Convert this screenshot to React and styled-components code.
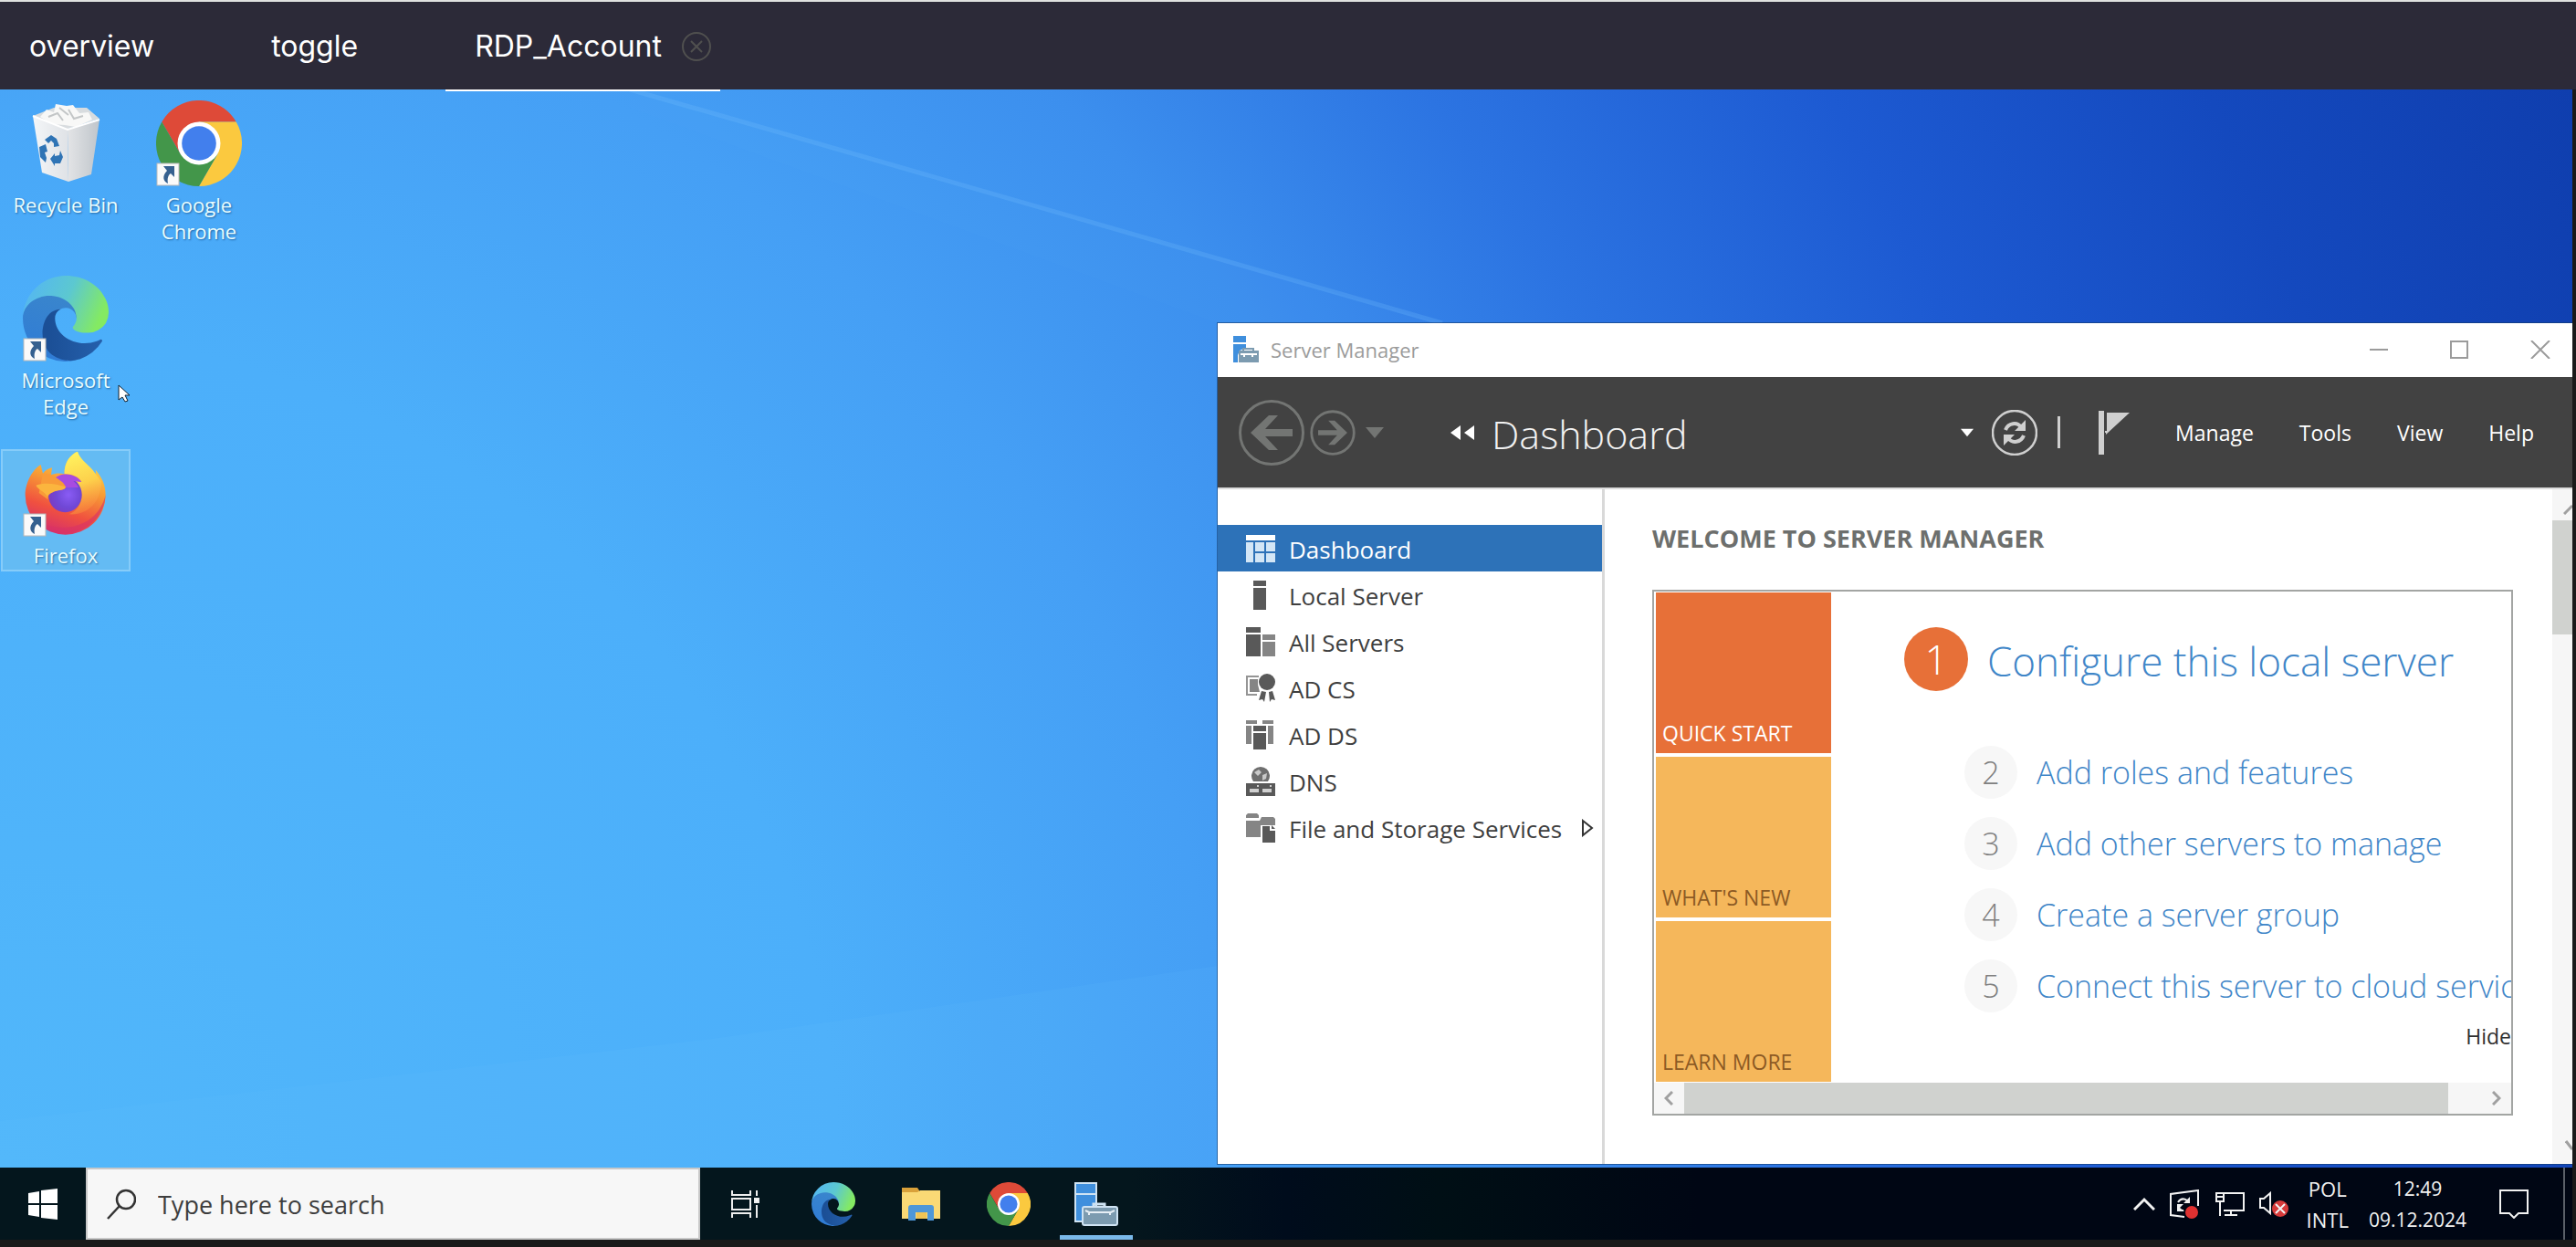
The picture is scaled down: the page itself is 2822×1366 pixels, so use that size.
import React from "react"
import styled, { createGlobalStyle } from "styled-components"

const GlobalStyle = createGlobalStyle`
  * {
    box-sizing: border-box;
  }
  body {
    margin: 0;
    background: #1a1a1a;
    font-family: "Open Sans", "Noto Sans", sans-serif;
  }
  button {
    padding: 0;
    border: 0;
    background: none;
    color: inherit;
    font: inherit;
    cursor: pointer;
  }
  svg {
    display: block;
    flex-shrink: 0;
  }
`

const Page = styled.div`
  display: flex;
  flex-direction: column;
  min-height: 100vh;
  border-top: 2px solid #dfe1df;
`

/* ---------- session tabs ---------- */

const TabBar = styled.nav`
  display: flex;
  align-items: stretch;
  gap: 64px;
  height: 96px;
  background: #2c2a38;
`
const TabItem = styled.div`
  display: flex;
  align-items: center;
  gap: 22px;
  position: relative;
  z-index: 1;
  margin-bottom: -2px;
  padding: 2px ${({ $active }) => ($active ? "10px" : "32px")} 0 32px;
  border-bottom: 2px solid ${({ $active }) => ($active ? "#fff" : "transparent")};
`
const Tab = styled.button`
  color: #fff;
  font-family: Inter, sans-serif;
  font-size: 32px;
  line-height: 40px;
`

/* ---------- remote desktop ---------- */

const Screen = styled.main`
  flex: 1;
  display: flex;
  flex-direction: column;
  padding: 0 4px 8px 0;
  background: #1a1a1a;
`
const Desktop = styled.section`
  flex: 1;
  position: relative;
  min-height: 1181px;
  overflow: hidden;
  background: radial-gradient(
    circle farthest-corner at 0 100%,
    #51b7fa 0%,
    #4caffa 30%,
    #459ff5 44%,
    #3c8fee 54%,
    #2c74e2 64%,
    #1d5ad2 76%,
    #1449be 88%,
    #0f3eae 100%
  );
`
const Wallpaper = styled.svg`
  position: absolute;
  inset: 0;
  width: 100%;
  height: 100%;
`
const Shortcuts = styled.div`
  position: relative;
  display: grid;
  grid-template-columns: 146px 146px;
  grid-auto-rows: 192px;
  padding-top: 10px;
`
const Shortcut = styled.button`
  display: flex;
  flex-direction: column;
  align-items: center;
  gap: 6px;
  justify-self: start;
  align-self: start;
  width: 142px;
  min-height: 134px;
  margin: 0 1px;
  border: 2px solid ${({ $selected }) => ($selected ? "#86ccf9" : "transparent")};
  background: ${({ $selected }) => ($selected ? "#64bbf3" : "none")};
  color: #e9fdff;
  font-size: 22px;
  line-height: 29px;
  text-shadow: 1px 1px 2px rgba(10, 60, 110, 0.6);
`
const ShortcutIcon = styled.span`
  position: relative;
  display: flex;
  align-items: center;
  justify-content: center;
  height: 94px;
`
const ShortcutArrow = styled.svg`
  position: absolute;
  left: 0;
  bottom: 0;
`
const Pointer = styled.svg`
  position: absolute;
  left: 129px;
  top: 323px;
`

/* ---------- server manager window ---------- */

const Window = styled.section`
  position: absolute;
  top: 256px;
  right: 0;
  bottom: 4px;
  left: 1334px;
  display: flex;
  flex-direction: column;
  background: #fff;
  box-shadow: 0 0 0 1px rgba(20, 60, 110, 0.6);
`
const TitleBar = styled.header`
  display: flex;
  align-items: center;
  gap: 12px;
  height: 59px;
  padding: 0 24px 2px 16px;
  color: #9b9b9b;
`
const WindowTitle = styled.h1`
  flex: 1;
  margin: 0;
  font-size: 22px;
  font-weight: 400;
`
const WindowControls = styled.div`
  display: flex;
  gap: 68px;
`
const CommandBar = styled.div`
  display: flex;
  align-items: center;
  height: 121px;
  padding: 0 42px 0 23px;
  background: #424242;
  color: #fff;
`
const History = styled.div`
  display: flex;
  align-items: center;
  gap: 6px;
`
const Breadcrumb = styled.div`
  display: flex;
  align-items: center;
  gap: 18px;
  flex: 1;
  margin-left: 68px;
`
const Location = styled.span`
  padding-top: 4px;
  color: #f2f2f2;
  font-size: 43px;
  font-weight: 300;
  line-height: 60px;
`
const Commands = styled.div`
  display: flex;
  align-items: center;
  gap: 20px;
`
const Separator = styled.span`
  width: 3px;
  height: 35px;
  background: #cfcfcf;
  margin: 0 22px 0 2px;
`
const Menu = styled.div`
  display: flex;
  gap: 50px;
  margin-left: 30px;
  font-size: 23px;
`

const WindowBody = styled.div`
  flex: 1;
  display: flex;
  min-height: 0;
  border-top: 2px solid #dcdcdc;
`
const Sidebar = styled.nav`
  flex: none;
  width: 424px;
  padding-top: 39px;
  border-right: 3px solid #d9d9d9;
`
const SideLink = styled.a`
  display: flex;
  align-items: center;
  gap: 15px;
  height: 51px;
  padding: 0 9px 0 31px;
  background: ${({ $active }) => ($active ? "#2d72b8" : "none")};
  color: ${({ $active }) => ($active ? "#fff" : "#3f3f3f")};
  font-size: 26px;
  text-decoration: none;
  white-space: nowrap;
`
const SideLabel = styled.span`
  flex: 1;
  padding-top: 2px;
`
const Content = styled.div`
  flex: 1;
  min-width: 0;
  padding: 35px 43px 0 52px;
`
const Heading = styled.h2`
  margin: 0 0 37px;
  color: #6d6f6d;
  font-size: 27px;
  font-weight: 700;
  line-height: 38px;
`
const Panel = styled.div`
  border: 2px solid #a3a5a3;
`
const PanelBody = styled.div`
  display: flex;
  gap: 80px;
  padding: 1px 0 1px 2px;
  overflow: hidden;
`
const Tiles = styled.div`
  flex: none;
  display: grid;
  gap: 4px;
  width: 192px;
`
const Tile = styled.button`
  display: flex;
  align-items: flex-end;
  height: 176px;
  padding: 0 7px 6px;
  background: ${({ $active }) => ($active ? "#e77038" : "#f5b75b")};
  color: ${({ $active }) => ($active ? "#fff" : "#8c5a24")};
  font-size: 23px;
`
const Steps = styled.div`
  flex: 1;
  display: flex;
  flex-direction: column;
  min-width: 0;
  padding-top: 38px;
`
const Step = styled.a`
  display: flex;
  align-items: center;
  gap: 21px;
  color: #3f86c8;
  font-size: ${({ $main }) => ($main ? "44px" : "34px")};
  font-weight: 300;
  line-height: 58px;
  text-decoration: none;
  white-space: nowrap;
`
const StepNumber = styled.span`
  flex: none;
  width: ${({ $main }) => ($main ? "70px" : "58px")};
  line-height: ${({ $main }) => ($main ? "70px" : "58px")};
  border-radius: 50%;
  background: ${({ $main }) => ($main ? "#e77038" : "#f7f7f7")};
  color: ${({ $main }) => ($main ? "#fff" : "#7f7f7f")};
  text-align: center;
`
const StepLabel = styled.span`
  padding-top: ${({ $main }) => ($main ? "4px" : "0")};
`
const StepList = styled.div`
  display: grid;
  gap: 20px;
  margin: 60px 0 10px 66px;
`
const Hide = styled.button`
  align-self: flex-end;
  color: #2f2f2f;
  font-size: 23px;
  line-height: 32px;
`
const HorizontalScroll = styled.div`
  display: flex;
  justify-content: space-between;
  align-items: center;
  height: 34px;
  padding: 0 11px;
  background: #f6f6f6;
`
const HorizontalThumb = styled.span`
  flex: 1;
  align-self: stretch;
  margin: 0 48px 0 12px;
  background: #d0d2cf;
`
const VerticalScroll = styled.div`
  flex: none;
  display: flex;
  flex-direction: column;
  align-items: flex-end;
  width: 22px;
  padding: 17px 0 14px;
  overflow: hidden;
  background: #f6f6f6;
`
const VerticalThumb = styled.span`
  width: 22px;
  height: 125px;
  margin: 6px 0 auto;
  background: #d0d2cf;
`

/* ---------- taskbar ---------- */

const Taskbar = styled.footer`
  display: flex;
  align-items: stretch;
  height: 79px;
  background: linear-gradient(90deg, #04161d 0%, #04161d 44%, #000c1c 50%, #000f15 56%, #000614 66%);
  color: #f2f2f2;
`
const StartButton = styled.button`
  display: flex;
  align-items: center;
  justify-content: center;
  width: 94px;
`
const Search = styled.label`
  display: flex;
  align-items: center;
  gap: 24px;
  width: 673px;
  padding-left: 21px;
  border: 2px solid #c8c8c8;
  background: #f7f7f7;
`
const SearchInput = styled.input`
  flex: 1;
  min-width: 0;
  padding: 2px 0 0;
  border: 0;
  outline: 0;
  background: none;
  font-family: inherit;
  font-size: 27px;

  &::placeholder {
    color: #3d3d3d;
    opacity: 1;
  }
`
const Apps = styled.div`
  display: flex;
  gap: 16px;
  margin-left: 10px;
`
const AppButton = styled.button`
  display: flex;
  align-items: center;
  justify-content: center;
  width: 80px;
  border-top: 5px solid transparent;
  border-bottom: 5px solid ${({ $open }) => ($open ? "#7ab9ea" : "transparent")};
`
const Tray = styled.div`
  display: flex;
  align-items: center;
  gap: 16px;
  margin-left: auto;
`
const TrayText = styled.div`
  margin: 0 ${({ $wide }) => ($wide ? "20px 0 6px" : "0 0 4px")};
  font-size: ${({ $wide }) => ($wide ? "21px" : "22px")};
  line-height: 34px;
  text-align: center;
`
const ShowDesktop = styled.button`
  align-self: stretch;
  width: 10px;
  margin-left: 22px;
  border-left: 2px solid #5b6069;
`

/* ---------- drawings ---------- */

const ChromeLogo = ({ size }) => (
    <svg width={size} height={size} viewBox="0 0 48 48">
        <path fill="#de4a38" d="M24 12H44.8A24 24 0 0 0 3.2 12L13.6 30Z" />
        <path fill="#fbc93f" d="M44.8 12A24 24 0 0 1 24 48L34.4 30L24 12Z" />
        <path fill="#43964a" d="M3.2 12A24 24 0 0 0 24 48L34.4 30H13.6Z" />
        <circle cx="24" cy="24" r="12" fill="#fff" />
        <circle cx="24" cy="24" r="9.6" fill="#427fed" />
    </svg>
)

const EdgeLogo = ({ size, id }) => (
    <svg width={size} height={size} viewBox="0 0 256 256">
        <defs>
            <linearGradient id={`${id}a`} x1="0.1" x2="1" y1="0.5" y2="0.5">
                <stop offset="0" stopColor="#1b4f96" />
                <stop offset="1" stopColor="#2560ac" />
            </linearGradient>
            <linearGradient id={`${id}b`} x1="0.6" x2="0.3" y1="0" y2="1">
                <stop offset="0" stopColor="#3a86cc" />
                <stop offset="1" stopColor="#2f7bd6" />
            </linearGradient>
            <linearGradient id={`${id}c`} x1="0" x2="1" y1="0.3" y2="0.6">
                <stop offset="0" stopColor="#54b6f3" />
                <stop offset="0.5" stopColor="#5cc8d0" />
                <stop offset="0.95" stopColor="#84ea62" />
            </linearGradient>
        </defs>
        <path
            fill={`url(#${id}b)`}
            d="M105.73 241.42A79.2 79.2 0 0 1 83 220.08a80.72 80.72 0 0 1 29.5-120.08c3.12-1.47 8.45-4.13 15.54-4a32.35 32.35 0 0 1 25.69 13 31.88 31.88 0 0 1 6.36 18.66c0-.21 24.46-79.6-80-79.6-43.9 0-80 41.66-80 78.21a130.15 130.15 0 0 0 12.11 56 128 128 0 0 0 156.38 67.11 75.55 75.55 0 0 1-62.78-8z"
        />
        <path
            fill={`url(#${id}a)`}
            d="M231.05 190.54a92.92 92.92 0 0 1-10.54 4.71 101.86 101.86 0 0 1-35.9 6.46c-47.32 0-88.54-32.55-88.54-74.32A31.48 31.48 0 0 1 112.5 100c-42.8 1.8-53.8 46.4-53.8 72.53 0 73.88 68.09 81.37 82.76 81.37 7.91 0 19.84-2.3 27-4.56l1.31-.44a128.34 128.34 0 0 0 66.6-52.8 4 4 0 0 0-5.32-5.56z"
        />
        <path
            fill={`url(#${id}c)`}
            d="M152.33 148.86c-.81 1.05-3.3 2.5-3.3 5.66 0 2.61 1.7 5.12 4.72 7.23 14.38 10 41.49 8.68 41.56 8.68a59.56 59.56 0 0 0 30.27-8.35 61.38 61.38 0 0 0 30.43-52.88c.26-22.41-8-37.31-11.34-43.91C223.46 23.84 177.72 0 128 0A128 128 0 0 0 0 126.2c.48-36.54 36.8-66.05 80-66.05 3.5 0 23.46.34 42 10.07 16.34 8.58 24.9 18.94 30.85 29.21 6.18 10.67 7.28 24.15 7.28 29.52s-2.74 13.33-7.8 19.91z"
        />
    </svg>
)

const FirefoxLogo = () => (
    <svg width="94" height="94" viewBox="77 612 282 282">
        <defs>
            <linearGradient id="foxBody" x1="0.7" x2="0.4" y1="0.1" y2="1">
                <stop offset="0" stopColor="#fdd548" />
                <stop offset="0.35" stopColor="#f79a35" />
                <stop offset="0.7" stopColor="#f0513f" />
                <stop offset="1" stopColor="#d62f6b" />
            </linearGradient>
            <linearGradient id="foxTail" x1="0.4" x2="0.6" y1="0" y2="1">
                <stop offset="0" stopColor="#fff25e" />
                <stop offset="0.5" stopColor="#fdd04b" />
                <stop offset="1" stopColor="#f7793a" stopOpacity="0.6" />
            </linearGradient>
            <radialGradient id="foxGlobe" cx="0.6" cy="0.5" r="0.6">
                <stop offset="0" stopColor="#8a5cf5" />
                <stop offset="0.6" stopColor="#7048d6" />
                <stop offset="1" stopColor="#7a3cc2" />
            </radialGradient>
        </defs>
        <path
            fill="url(#foxBody)"
            d="M136 657L143 686C150 676 160 670 173 667L170 690C185 684 200 684 214 688C212 655 230 625 257 614C262 640 300 670 312 695L310 682L318 688L316 674C338 700 349 725 349 757A132 130 0 0 1 85 757C85 715 110 672 136 657Z"
        />
        <path
            fill="#d93266"
            opacity="0.6"
            d="M349 757A132 130 0 0 1 115 834C150 860 190 868 235 862C300 850 335 810 349 757Z"
        />
        <path
            fill="url(#foxTail)"
            d="M257 614C230 625 212 655 214 688C240 686 262 698 270 713L243 712C266 728 275 748 270 768C266 795 250 812 228 820C290 826 338 775 334 712L312 682C300 662 264 640 257 614Z"
        />
        <ellipse cx="216" cy="756" rx="55" ry="58" fill="url(#foxGlobe)" />
        <path fill="#a84be0" d="M178 706C200 680 250 684 270 714L243 711C250 718 256 722 260 732L217 732Z" />
        <path fill="#f89b38" d="M143 686L170 690C190 702 212 714 218 730C216 744 190 738 175 748C162 754 158 762 160 772L130 750Z" />
        <path fill="#fbb53e" d="M120 725C150 714 185 720 218 730C212 746 190 738 175 748C162 752 160 758 158 762C150 746 130 742 120 725Z" />
    </svg>
)

const RecycleBin = () => (
    <svg width="94" height="94" viewBox="0 0 94 94">
        <defs>
            <linearGradient id="binFront" x1="0" x2="1">
                <stop offset="0" stopColor="#f4f6f8" />
                <stop offset="1" stopColor="#dfe2e6" />
            </linearGradient>
            <linearGradient id="binSide" x1="0" x2="1">
                <stop offset="0" stopColor="#e3e4e6" />
                <stop offset="1" stopColor="#bfc5cb" />
            </linearGradient>
        </defs>
        <path fill="#d8dcdf" d="M11 17L34 8L70 8L84 20L47 32Z" />
        <path fill="#f8f8f7" d="M19 18L26 10L34 13L36 4L48 6L55 5L62 14L72 13L76 21L58 29L46 27L32 26Z" />
        <path fill="none" stroke="#c3c6c7" strokeWidth="2" d="M28 18L38 14L44 22M50 10L56 20L66 17M40 8L50 16" />
        <path fill="url(#binFront)" d="M11 17L49 32L50 89L21 79Z" />
        <path fill="url(#binSide)" d="M49 32L84 21L75 81L50 89Z" />
        <path fill="none" stroke="#fff" strokeWidth="2" d="M11 17L49 32L84 21" />
        <path fill="#2f74b5" d="M24 43L31 38L37 42L40 50L34 51L34 47L31 44L28 47ZM18 51L25 48L27 56L24 57L26 63L25 68L19 62ZM30 64L35 58L35 61L40 60L41 55L44 62L41 69L35 69L35 72Z" />
    </svg>
)

const LinkArrow = () => (
    <ShortcutArrow width="26" height="26" viewBox="0 0 26 26">
        <rect x="1" y="1" width="24" height="24" fill="#fafafa" stroke="#b9b9b9" />
        <path fill="#35608f" d="M8 4H20V16L16 12C13 14 12 18 13 23C8 21 6 15 12 9Z" />
    </ShortcutArrow>
)

const ServerLogo = ({ size }) => (
    <svg width={size} height={size} viewBox="0 0 48 48">
        <path fill="#3f8fdd" stroke="#cfe3f3" strokeWidth="2" d="M1 1H24V13H1ZM1 13H24V43H1Z" />
        <path fill="none" stroke="#cfe3f3" strokeWidth="3" d="M21 27V24H33V27" />
        <rect x="9" y="27" width="38" height="20" rx="2" fill="#7c9bb0" stroke="#cfe3f3" strokeWidth="2" />
        <path fill="none" stroke="#e6eef5" strokeWidth="2" d="M12 31L16 33H40L44 31M16 33V36M39 33V36" />
    </svg>
)

const SmallServerLogo = () => (
    <svg width="30" height="30" viewBox="0 0 30 30">
        <path fill="#3f8fdd" d="M1 0H15V7H1ZM1 9H15V13L8 16L6 21V29H1Z" />
        <path fill="none" stroke="#7c9bb0" strokeWidth="2" d="M12 17V14H23V17" />
        <path fill="#7c9bb0" d="M7 16H29V29H7Z" />
        <path fill="none" stroke="#fff" strokeWidth="2" d="M9 20H27M13 20V23M22 20V23" />
    </svg>
)

const FolderIcon = () => (
    <svg width="44" height="36" viewBox="0 0 44 36">
        <path fill="#d9a13a" d="M1 0H18L20 3V8H1Z" />
        <path fill="#fad975" d="M1 5H18L21 3H43V34H1Z" />
        <path fill="#4e97d8" d="M8 36V22Q8 19 11 19H33Q36 19 36 22V36H29V27H16V36Z" />
        <path fill="#f0c455" d="M17 27H28V34H17Z" />
    </svg>
)

const CircleArrow = ({ size, flip }) => (
    <svg width={size} height={size} viewBox="0 0 72 72">
        <circle cx="36" cy="36" r={flip ? 33.5 : 34.5} fill="none" stroke="#737573" strokeWidth={flip ? 4 : 3} />
        <g transform={flip ? "rotate(180 36 36)" : undefined} fill="#737573">
            <path d="M13 36L33 17H43L29 32H59V40H29L43 55H33Z" />
        </g>
    </svg>
)

const Caret = ({ width, height, color }) => (
    <svg width={width} height={height} viewBox="0 0 20 12">
        <path fill={color} d="M0 0H20L10 12Z" />
    </svg>
)

const sideIcons = {
    dashboard: (
        <g fill="#d3e6f6">
            <path fill="#fff" d="M0 1H32V7H0Z" />
            <path d="M0 9H8V31H0ZM10 9H20V19H10ZM22 9H32V19H22ZM10 21H20V31H10ZM22 21H32V31H22Z" />
        </g>
    ),
    local: <path fill="#595959" d="M8 0H22V6H8ZM8 8H22V32H8Z" />,
    all: (
        <>
            <path fill="#595959" d="M0 0H16V6H0ZM0 8H16V32H0Z" />
            <path fill="#858585" d="M18 8H32V14H18ZM18 16H32V32H18Z" />
        </>
    ),
    cs: (
        <>
            <path fill="none" stroke="#959595" strokeWidth="2" d="M14 3H1V23H12" />
            <path fill="#858585" d="M4 6H13V12L15 20H4Z" />
            <circle cx="23" cy="9" r="9" fill="#595959" />
            <path fill="#595959" d="M17 19L22 20L20 31L18 28L14 29ZM25 20L29 19L32 29L28 28L26 31Z" />
        </>
    ),
    ds: (
        <>
            <path fill="#858585" d="M0 0H12V4H0ZM18 0H30V4H18ZM0 6H6V26H0ZM24 6H30V26H24Z" />
            <path fill="#595959" d="M8 6H22V12H8ZM8 14H22V32H8Z" />
        </>
    ),
    dns: (
        <>
            <path fill="#6f6f6f" d="M8 16A10 10 0 1 1 24 16Z" />
            <path fill="#c9c9c9" d="M9 6L14 3L17 6L13 10ZM18 9L23 7L22 13L18 15Z" />
            <path fill="#595959" d="M0 18H32V32H0Z" />
            <path fill="#d0d0d0" d="M4 24H14V28H4ZM18 24H28V28H18ZM12 20H14V22H12ZM26 20H28V22H26Z" />
        </>
    ),
    files: (
        <>
            <path fill="#858585" d="M0 2L2 0H12L14 2V5H0ZM0 8H15L17 4H30L32 6V13H16V26H0Z" />
            <path fill="#595959" d="M18 14H26V19H32V32H18Z" />
            <path fill="#595959" d="M28 13L32 17H28Z" />
        </>
    ),
}

const SideIcon = ({ name }) => (
    <svg width="32" height="32" viewBox="0 0 32 32">{sideIcons[name]}</svg>
)

const Chevron = ({ d, width, height, color = "#a0a0a0" }) => (
    <svg width={width} height={height} viewBox={`0 0 ${width} ${height}`}>
        <path d={d} fill="none" stroke={color} strokeWidth="3" />
    </svg>
)

/* ---------- content ---------- */

const servers = [
    { icon: "dashboard", label: "Dashboard", active: true },
    { icon: "local", label: "Local Server" },
    { icon: "all", label: "All Servers" },
    { icon: "cs", label: "AD CS" },
    { icon: "ds", label: "AD DS" },
    { icon: "dns", label: "DNS" },
    { icon: "files", label: "File and Storage Services", more: true },
]

const steps = [
    "Add roles and features",
    "Add other servers to manage",
    "Create a server group",
    "Connect this server to cloud services",
]

const SessionTabs = () => (
    <TabBar>
        <TabItem><Tab>overview</Tab></TabItem>
        <TabItem><Tab>toggle</Tab></TabItem>
        <TabItem $active>
            <Tab>RDP_Account</Tab>
            <button aria-label="Close RDP_Account">
                <svg width="32" height="32" viewBox="0 0 32 32" fill="none" stroke="#50504f" strokeWidth="2">
                    <circle cx="16" cy="16" r="15" />
                    <path d="M10 10L22 22M22 10L10 22" />
                </svg>
            </button>
        </TabItem>
    </TabBar>
)

const DesktopShortcuts = () => (
    <Shortcuts>
        <Shortcut>
            <ShortcutIcon><RecycleBin /></ShortcutIcon>
            Recycle Bin
        </Shortcut>
        <Shortcut>
            <ShortcutIcon><ChromeLogo size={94} /><LinkArrow /></ShortcutIcon>
            <span>Google<br />Chrome</span>
        </Shortcut>
        <Shortcut>
            <ShortcutIcon><EdgeLogo size={94} id="deskEdge" /><LinkArrow /></ShortcutIcon>
            <span>Microsoft<br />Edge</span>
        </Shortcut>
        <span />
        <Shortcut $selected>
            <ShortcutIcon><FirefoxLogo /><LinkArrow /></ShortcutIcon>
            Firefox
        </Shortcut>
    </Shortcuts>
)

const ServerManager = () => (
    <Window>
        <TitleBar>
            <SmallServerLogo />
            <WindowTitle>Server Manager</WindowTitle>
            <WindowControls>
                <button aria-label="Minimize">
                    <svg width="20" height="20"><path d="M0 10H20" stroke="#9b9b9b" strokeWidth="2" /></svg>
                </button>
                <button aria-label="Maximize">
                    <svg width="20" height="20"><path d="M1 1H19V19H1Z" fill="none" stroke="#9b9b9b" strokeWidth="2" /></svg>
                </button>
                <button aria-label="Close">
                    <svg width="22" height="20"><path d="M1 0L21 20M21 0L1 20" stroke="#9b9b9b" strokeWidth="2" /></svg>
                </button>
            </WindowControls>
        </TitleBar>
        <CommandBar>
            <History>
                <button aria-label="Back"><CircleArrow size={72} /></button>
                <button aria-label="Forward"><CircleArrow size={50} flip /></button>
                <Caret width={30} height={12} color="#737573" />
            </History>
            <Breadcrumb>
                <svg width="27" height="16" viewBox="0 0 27 16">
                    <path fill="#fff" d="M0 8L11 0V16ZM15 8L26 0V16Z" />
                </svg>
                <Location>Dashboard</Location>
            </Breadcrumb>
            <Commands>
                <Caret width={14} height={10} color="#fff" />
                <button aria-label="Refresh">
                    <svg width="50" height="50" viewBox="0 0 50 50" fill="none" stroke="#cfcfcf">
                        <circle cx="25" cy="25" r="24" strokeWidth="2.5" />
                        <path strokeWidth="4" d="M15 22C18 14 28 13 32 19M35 28C32 36 22 37 18 31" />
                        <path fill="#cfcfcf" stroke="none" d="M37 11V23H25ZM13 39V27H25Z" />
                    </svg>
                </button>
                <Separator />
                <button aria-label="Notifications">
                    <svg width="34" height="48" viewBox="0 0 34 48">
                        <path fill="#cfcfcf" d="M0 0H6V48H0ZM9 2H34L8 26V24H7V22H9Z" />
                    </svg>
                </button>
                <Menu>
                    <button>Manage</button>
                    <button>Tools</button>
                    <button>View</button>
                    <button>Help</button>
                </Menu>
            </Commands>
        </CommandBar>
        <WindowBody>
            <Sidebar>
                {servers.map(({ icon, label, active, more }) => (
                    <SideLink key={label} href="#" $active={active}>
                        <SideIcon name={icon} />
                        <SideLabel>{label}</SideLabel>
                        {more && (
                            <svg width="14" height="20" viewBox="0 0 14 20">
                                <path fill="none" stroke="#333" strokeWidth="2" d="M2 2L12 10L2 18Z" />
                            </svg>
                        )}
                    </SideLink>
                ))}
            </Sidebar>
            <Content>
                <Heading>WELCOME TO SERVER MANAGER</Heading>
                <Panel>
                    <PanelBody>
                        <Tiles>
                            <Tile $active>QUICK START</Tile>
                            <Tile>WHAT'S NEW</Tile>
                            <Tile>LEARN MORE</Tile>
                        </Tiles>
                        <Steps>
                            <Step href="#" $main>
                                <StepNumber $main>1</StepNumber>
                                <StepLabel $main>Configure this local server</StepLabel>
                            </Step>
                            <StepList>
                                {steps.map((label, i) => (
                                    <Step key={label} href="#">
                                        <StepNumber>{i + 2}</StepNumber>
                                        <StepLabel>{label}</StepLabel>
                                    </Step>
                                ))}
                            </StepList>
                            <Hide>Hide</Hide>
                        </Steps>
                    </PanelBody>
                    <HorizontalScroll>
                        <Chevron width={10} height={16} d="M9 1L2 8L9 15" />
                        <HorizontalThumb />
                        <Chevron width={10} height={16} d="M1 1L8 8L1 15" />
                    </HorizontalScroll>
                </Panel>
            </Content>
            <VerticalScroll>
                <Chevron width={10} height={11} d="M1 10L10 1" />
                <VerticalThumb />
                <Chevron width={8} height={12} d="M1 1L8 10" />
            </VerticalScroll>
        </WindowBody>
    </Window>
)

const TaskbarRow = () => (
    <Taskbar>
        <StartButton aria-label="Start">
            <svg width="32" height="34" viewBox="0 0 32 34">
                <path fill="#fff" d="M0 5L12 3V16H0ZM14 2L32 0V16H14ZM0 18H12V31L0 29ZM14 18H32V34L14 32Z" />
            </svg>
        </StartButton>
        <Search>
            <svg width="32" height="34" viewBox="0 0 32 34" fill="none" stroke="#333" strokeWidth="2.5">
                <circle cx="21" cy="12" r="10" />
                <path d="M14 19L1 33" />
            </svg>
            <SearchInput aria-label="Search" placeholder="Type here to search" />
        </Search>
        <Apps>
            <AppButton aria-label="Task View">
                <svg width="32" height="30" viewBox="0 0 32 30" fill="none" stroke="#eee" strokeWidth="2">
                    <path d="M1 0V5H21V0M1 9H21V21H1ZM1 30V25H21V30M28 0V6M28 16V30" />
                    <path fill="#fff" d="M26 9H30V13H26Z" />
                </svg>
            </AppButton>
            <AppButton aria-label="Edge"><EdgeLogo size={48} id="barEdge" /></AppButton>
            <AppButton aria-label="File Explorer"><FolderIcon /></AppButton>
            <AppButton aria-label="Chrome"><ChromeLogo size={48} /></AppButton>
            <AppButton aria-label="Server Manager" $open><ServerLogo size={48} /></AppButton>
        </Apps>
        <Tray>
            <Chevron width={24} height={15} color="#f2f2f2" d="M1 14L12 3L23 14" />
            <svg width="34" height="32" viewBox="0 0 34 32" fill="none" stroke="#f2f2f2" strokeWidth="2">
                <path d="M31 18V1L1 5V28L16 30" />
                <path d="M9 14Q13 8 19 12M10 23H15" />
                <path fill="#f2f2f2" stroke="none" d="M22 8V15H15ZM8 16H15L11 20L16 24H8Z" />
                <circle cx="24" cy="25" r="7" fill="#e03131" stroke="none" />
            </svg>
            <svg width="32" height="28" viewBox="0 0 32 28" fill="none" stroke="#f2f2f2" strokeWidth="2">
                <path d="M9 2H31V21H9M1 2H9V11H1ZM1 6H9M5 11V27M17 21V26M10 26H24" />
            </svg>
            <svg width="32" height="28" viewBox="0 0 32 28" fill="none" stroke="#f2f2f2" strokeWidth="2">
                <path d="M1 8H5L12 2V24L5 18H1Z" />
                <circle cx="23" cy="19" r="9" fill="#d63a3a" stroke="none" />
                <path d="M18 14L28 24M28 14L18 24" />
            </svg>
            <TrayText>POL<br />INTL</TrayText>
            <TrayText $wide>12:49<br />09.12.2024</TrayText>
            <svg width="32" height="32" viewBox="0 0 32 32">
                <path fill="none" stroke="#f2f2f2" strokeWidth="2" d="M1 1H31V26H21L16 31L11 26H1Z" />
            </svg>
            <ShowDesktop aria-label="Show desktop" />
        </Tray>
    </Taskbar>
)

const App = () => (
    <Page>
        <GlobalStyle />
        <SessionTabs />
        <Screen>
            <Desktop>
                <Wallpaper viewBox="0 0 2818 1181" preserveAspectRatio="none">
                    <path fill="#5ab4ff" opacity="0.05" d="M690 0L1580 256L1334 256L690 20Z" />
                    <path fill="none" stroke="#7cc4ff" strokeWidth="5" opacity="0.22" d="M690 0L1580 256" />
                    <path fill="#6cc6ff" opacity="0.1" d="M0 1130L780 1040L1334 960V1181H0Z" />
                </Wallpaper>
                <DesktopShortcuts />
                <Pointer width="14" height="20" viewBox="0 0 14 20">
                    <path fill="#fff" stroke="#14202c" d="M1 1V17L5 14L8 19L11 18L8 12H13Z" />
                </Pointer>
                <ServerManager />
            </Desktop>
            <TaskbarRow />
        </Screen>
    </Page>
)

export default App
